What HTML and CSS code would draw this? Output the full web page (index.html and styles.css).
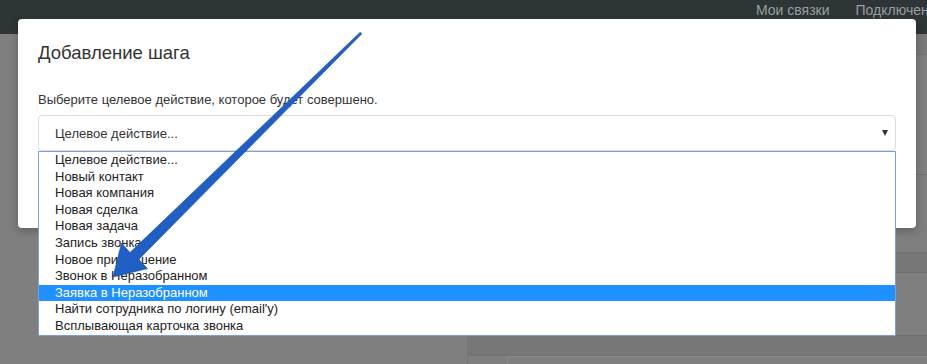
FILE: index.html
```html
<!DOCTYPE html>
<html lang="ru">
<head>
  <meta charset="UTF-8" />
  <meta name="viewport" content="width=device-width, initial-scale=1.0"/>
  <title>Добавление шага</title>
  <link rel="stylesheet" href="styles.css">
</head>
<body>
  <header class="topbar">
    <nav class="topnav">
      <a href="#">Мои связки</a>
      <a href="#">Подключения</a>
    </nav>
  </header>

  <div class="page">
    <div class="page-left"></div>
    <div class="page-right">
      <div class="bg-row bg-row-head"></div>
      <div class="bg-row bg-row-tall"></div>
      <div class="bg-row bg-row-mid"></div>
      <div class="bg-row bg-row-dark"></div>
      <div class="bg-row bg-row-body"></div>
      <div class="bg-row bg-row-dark"></div>
      <div class="bg-panel"></div>
    </div>
  </div>

  <div class="modal">
    <h4 class="modal-title">Добавление шага</h4>
    <p class="modal-text">Выберите целевое действие, которое будет совершено.</p>

    <div class="select-wrap">
      <div class="select">
        <span>Целевое действие...</span>
        <span class="caret"></span>
      </div>
      <ul class="options">
        <li>Целевое действие...</li>
        <li>Новый контакт</li>
        <li>Новая компания</li>
        <li>Новая сделка</li>
        <li>Новая задача</li>
        <li>Запись звонка</li>
        <li>Новое приглашение</li>
        <li>Звонок в Неразобранном</li>
        <li class="active">Заявка в Неразобранном</li>
        <li>Найти сотрудника по логину (email'у)</li>
        <li>Всплывающая карточка звонка</li>
      </ul>
    </div>
  </div>

  <!-- annotation arrow drawn over the screenshot -->
  <svg class="pointer" width="927" height="364" viewBox="0 0 927 364">
    <defs>
      <linearGradient id="arrowFill" x1="0" y1="0" x2="1" y2="1">
        <stop offset="0" stop-color="#2a6fd6"/>
        <stop offset="1" stop-color="#1550b2"/>
      </linearGradient>
    </defs>
    <polygon points="360.2,32.2 130,252.6 121.5,243 113,277 147.5,268.6 138.8,259.4 361.8,33.8"
             fill="url(#arrowFill)" stroke="#164a9c" stroke-width="0.6" stroke-linejoin="round"/>
  </svg>
</body>
</html>
```

FILE: styles.css
```css
body {
  margin: 0;
  width: 927px;
  height: 364px;
  overflow: hidden;
  position: relative;
  background: #7f7f7f;
  font-family: "Liberation Sans", Arial, sans-serif;
  color: #333;
}
.topbar {
  height: 34px;
  background: #2e3536;
}
.topnav {
  display: flex;
  padding-left: 743px;
  white-space: nowrap;
  overflow: hidden;
}
.topnav a {
  padding: 0 13px;
  line-height: 20px;
  font-size: 14px;
  color: #9a9e9e;
  text-decoration: none;
}
.page {
  display: grid;
  grid-template-columns: 467px 1fr;
  height: 330px;
}
.page-left {
  background: #7f7f7f;
}
.page-right {
  display: flex;
  flex-direction: column;
  border-left: 1px solid #747474;
}
.bg-row {
  border-bottom: 1px solid #727272;
  box-sizing: border-box;
}
.bg-row-head {
  height: 21px;
  background: #797979;
}
.bg-row-tall {
  height: 120px;
  background: #7f7f7f;
}
.bg-row-mid {
  height: 78px;
  background: #7f7f7f;
}
.bg-row-dark {
  height: 20px;
  background: #777;
}
.bg-row-body {
  height: 63px;
  background: #7f7f7f;
}
.bg-panel {
  flex: 1;
  margin-left: 39px;
  background: #7f7f7f;
  border-top: 1px solid #8a8a8a;
  border-left: 1px solid #8a8a8a;
}
.modal {
  position: absolute;
  left: 18px;
  top: 19px;
  width: 898px;
  height: 209px;
  box-sizing: border-box;
  padding: 0 20px;
  background: #fff;
  border-radius: 4px;
  box-shadow: 0 3px 9px rgba(0,0,0,0.25);
}
.modal-title {
  margin: 24px 0 0;
  font-size: 18.5px;
  line-height: 20px;
  font-weight: normal;
  color: #333;
}
.modal-text {
  margin: 28px 0 0;
  font-size: 13px;
  line-height: 18px;
}
.select-wrap {
  position: relative;
  margin-top: 6px;
}
.select {
  display: flex;
  justify-content: space-between;
  align-items: center;
  height: 36px;
  box-sizing: border-box;
  padding: 0 7px 0 16px;
  border: 1px solid #dcdcdc;
  border-radius: 4px;
  font-size: 13px;
  color: #333;
}
.caret {
  width: 0;
  height: 0;
  border-left: 3.5px solid transparent;
  border-right: 3.5px solid transparent;
  border-top: 6px solid #333;
}
.options {
  position: absolute;
  top: 36px;
  left: 0;
  right: 0;
  margin: 0;
  padding: 0;
  list-style: none;
  background: #fff;
  border: 1px solid #7b9fd9;
  font-size: 13px;
  color: #222;
}
.options li {
  height: 16.6px;
  line-height: 16.6px;
  padding-left: 16px;
  white-space: nowrap;
}
.options li.active {
  background: #1e90ff;
  color: #fff;
}
.pointer {
  position: absolute;
  left: 0;
  top: 0;
  pointer-events: none;
}
```
